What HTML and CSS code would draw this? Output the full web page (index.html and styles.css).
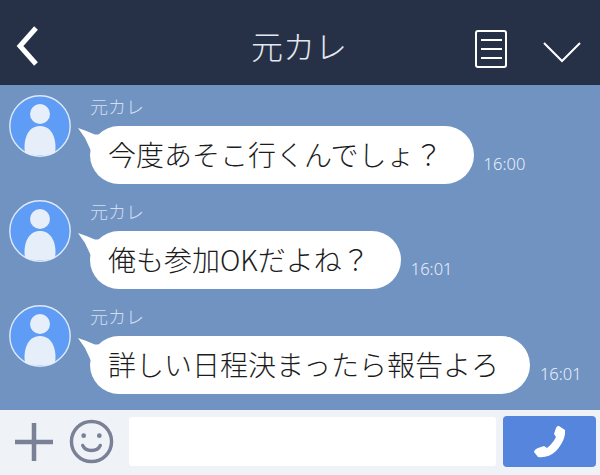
FILE: index.html
```html
<!DOCTYPE html>
<html lang="ja">
<head>
<meta charset="UTF-8">
<title>元カレ</title>
<link rel="stylesheet" href="styles.css">
</head>
<body>
<div class="app">
  <div class="header">
    <svg class="back" width="30" height="44" viewBox="0 0 30 44"><path d="M25 4 L9 22 L25 40" fill="none" stroke="#fff" stroke-width="5"/></svg>
    <div class="title">元カレ</div>
    <svg class="note" width="34" height="40" viewBox="0 0 34 40" fill="none" stroke="#fff" stroke-width="2"><rect x="2" y="2" width="30" height="36" rx="2"/><path d="M7 11H28M7 20H28M7 29H28"/></svg>
    <svg class="down" width="40" height="24" viewBox="0 0 40 24"><path d="M2 3 L20 21 L38 3" fill="none" stroke="#fff" stroke-width="2"/></svg>
  </div>

  <div class="chat">
    <div class="row">
      <svg class="avatar" width="62" height="62" viewBox="0 0 62 62"><use href="#person"/></svg>
      <div class="msg">
        <div class="name">元カレ</div>
        <div class="line">
          <div class="bubble">今度あそこ行くんでしょ？</div>
          <div class="time">16:00</div>
        </div>
      </div>
    </div>
    <div class="row">
      <svg class="avatar" width="62" height="62" viewBox="0 0 62 62"><use href="#person"/></svg>
      <div class="msg">
        <div class="name">元カレ</div>
        <div class="line">
          <div class="bubble">俺も参加OKだよね？</div>
          <div class="time">16:01</div>
        </div>
      </div>
    </div>
    <div class="row">
      <svg class="avatar" width="62" height="62" viewBox="0 0 62 62"><use href="#person"/></svg>
      <div class="msg">
        <div class="name">元カレ</div>
        <div class="line">
          <div class="bubble">詳しい日程決まったら報告よろ</div>
          <div class="time">16:01</div>
        </div>
      </div>
    </div>
  </div>

  <div class="footer">
    <svg class="plus" width="38" height="38" viewBox="0 0 38 38"><path d="M0 19H38M19 0V38" stroke="#7a8096" stroke-width="4.5"/></svg>
    <svg class="smile" width="45" height="45" viewBox="0 0 46 46" fill="none" stroke="#7a8096" stroke-width="3.5"><circle cx="23" cy="23" r="20.5"/><path d="M14 27 C17 34 29 34 32 27" stroke-linecap="round"/><circle cx="15" cy="17" r="2.4" fill="#7a8096" stroke="none"/><circle cx="31" cy="17" r="2.4" fill="#7a8096" stroke="none"/></svg>
    <div class="input"></div>
    <div class="send">
      <svg width="34" height="34" viewBox="0 0 34 34"><path d="M26 1 L32 5 C33 12 28 21 23 26 C18 31 11 33 5 32 L1 27 C1 25 3 24 5 23 L11 21 L14 23 C17 21 21 16 23 12 L21 9 L23 3 C24 1 25 1 26 1 Z" fill="#fff"/></svg>
    </div>
  </div>
</div>

<svg width="0" height="0" class="defs">
  <symbol id="person" viewBox="0 0 62 62">
    <circle cx="31" cy="31" r="30.2" fill="#5f9cf5" stroke="#dfe9f8" stroke-width="1.4"/>
    <circle cx="31" cy="19" r="10" fill="#e6eefa"/>
    <path d="M16 58 C14 46 18 31 31 31 C44 31 48 46 46 58 C38 61 24 61 16 58 Z" fill="#e6eefa"/>
  </symbol>
</svg>
</body>
</html>
```

FILE: styles.css
```css
* {
	box-sizing: border-box;
}

body {
	margin: 0;
	padding: 0;
	background: #7093c2;
	font-family: "Noto Sans CJK JP", "Noto Sans", sans-serif;
}

.app {
	width: 600px;
	height: 475px;
	display: flex;
	flex-direction: column;
	overflow: hidden;
}

.defs {
	position: absolute;
}

.header {
	height: 85px;
	background: #263147;
	display: flex;
	align-items: center;
	padding: 4px 18px 0 11px;
}

.back {
	flex: none;
	margin-top: 2px;
}

.title {
	flex: 1;
	color: #e4e8ee;
	font-size: 32px;
	font-weight: 300;
	text-align: center;
	padding-left: 83px;
}

.note {
	margin: 9px 34px 0 0;
}

.down {
	margin-top: 15px;
}

.chat {
	flex: 1;
	background: #7093c2;
	padding: 10px 0 0 9px;
}

.row {
	display: flex;
	height: 105px;
}

.avatar {
	flex: none;
	margin-right: 19px;
}

.msg {
	flex: 1;
}

.name {
	color: #d3def0;
	font-size: 18px;
	line-height: 22px;
	height: 31px;
	font-weight: 300;
}

.line {
	display: flex;
	align-items: flex-end;
}

.bubble {
	position: relative;
	height: 58px;
	line-height: 56px;
	padding: 0 31px 0 18px;
	background: #fff;
	border-radius: 29px;
	color: #1c1c1c;
	font-size: 28px;
	font-weight: 300;
	white-space: nowrap;
}

.bubble::before {
	content: "";
	position: absolute;
	left: -12px;
	top: 2px;
	width: 28px;
	height: 22px;
	background: #fff;
	clip-path: polygon(0 0, 30% 14%, 60% 30%, 100% 30%, 100% 100%, 45% 100%, 25% 45%);
}

.time {
	color: #e8eef8;
	font-size: 16.5px;
	line-height: 20px;
	margin: 0 0 10px 10px;
	font-family: "Noto Sans", sans-serif;
	font-weight: 300;
}

.footer {
	height: 65px;
	background: #eff2f7;
	display: flex;
	align-items: center;
	padding: 0 4px 2px 15px;
}

.plus {
	margin-right: 16px;
}

.smile {
	margin-right: 15px;
}

.input {
	width: 367px;
	height: 49px;
	background: #fff;
	border-radius: 3px;
	margin-right: 7px;
}

.send {
	width: 93px;
	height: 51px;
	background: #5585dd;
	border-radius: 4px;
	display: flex;
	align-items: center;
	justify-content: center;
}
```
